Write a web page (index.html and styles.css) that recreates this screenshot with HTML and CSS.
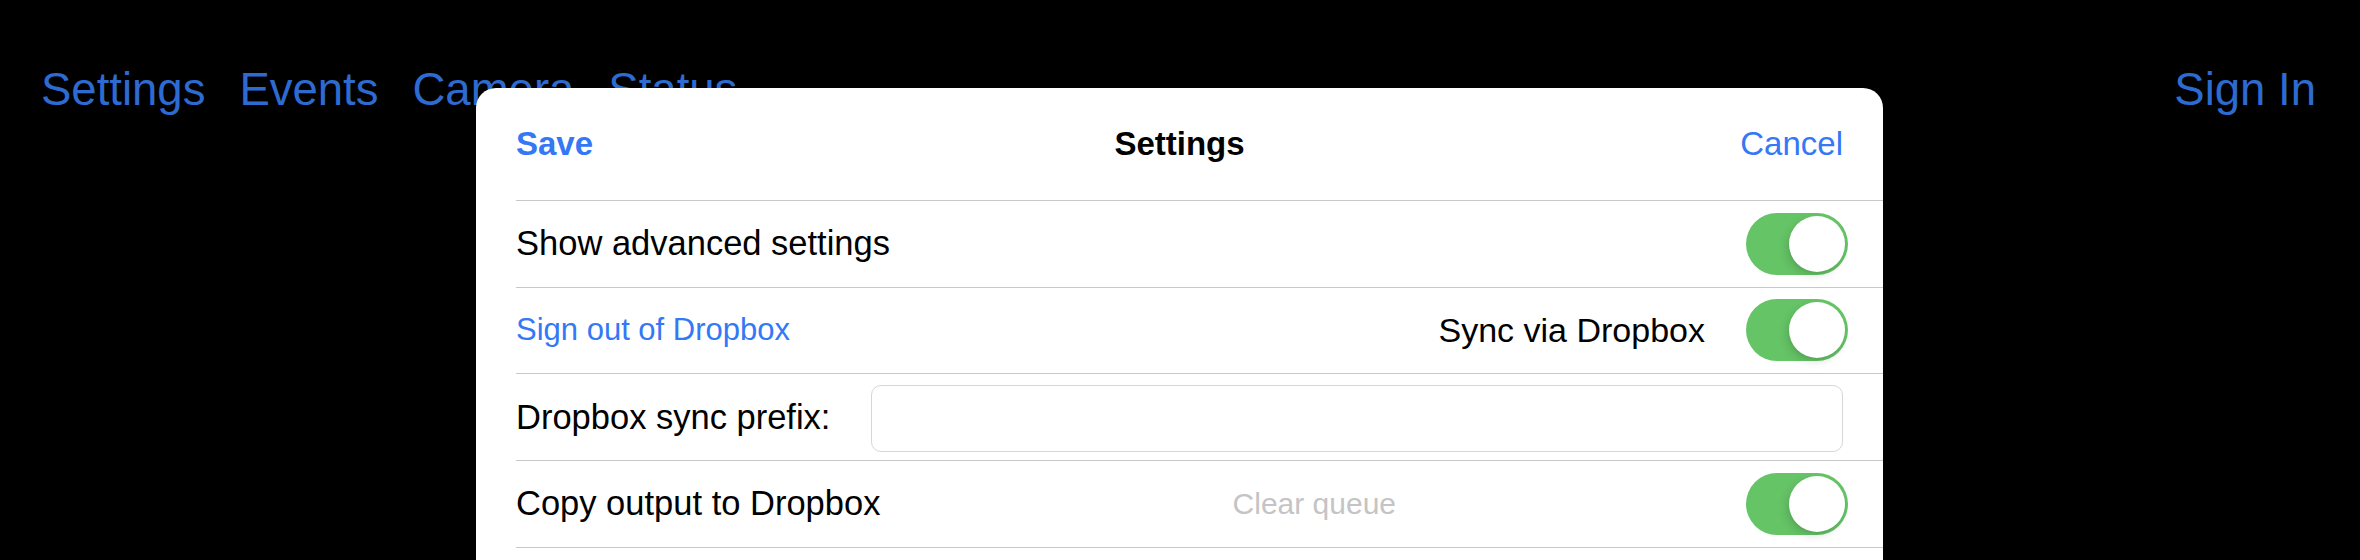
FILE: index.html
```html
<!DOCTYPE html>
<html lang="en">
<head>
<meta charset="utf-8">
<title>Settings</title>
<link rel="stylesheet" href="styles.css">
</head>
<body>
  <nav class="topbar">
    <div class="tabs">
      <a class="tab">Settings</a>
      <a class="tab">Events</a>
      <a class="tab">Camera</a>
      <a class="tab">Status</a>
    </div>
    <a class="tab">Sign In</a>
  </nav>

  <section class="sheet">
    <header class="sheet-header">
      <a class="btn btn-save">Save</a>
      <h1 class="sheet-title">Settings</h1>
      <a class="btn btn-cancel">Cancel</a>
    </header>

    <div class="list">
      <div class="row">
        <span class="label grow">Show advanced settings</span>
        <div class="switch on"><span class="knob"></span></div>
      </div>

      <div class="row">
        <a class="link grow">Sign out of Dropbox</a>
        <span class="label side-label">Sync via Dropbox</span>
        <div class="switch on"><span class="knob"></span></div>
      </div>

      <div class="row">
        <span class="label">Dropbox sync prefix:</span>
        <input class="text-input" type="text" value="">
      </div>

      <div class="row">
        <span class="label grow">Copy output to Dropbox</span>
        <a class="link disabled clear-queue">Clear queue</a>
        <div class="switch on"><span class="knob"></span></div>
      </div>

      <div class="row"></div>
    </div>
  </section>
</body>
</html>
```

FILE: styles.css
```css
html, body {
  margin: 0;
  padding: 0;
  height: 560px;
  overflow: hidden;
  background: #000;
  font-family: "Liberation Sans", Arial, sans-serif;
}

.topbar {
  display: flex;
  justify-content: space-between;
  padding: 67px 44px 0 41px;
  font-size: 45.5px;
  line-height: 46px;
}

.tabs {
  display: flex;
  gap: 34px;
}

.tab {
  color: #2d6bd1;
  text-decoration: none;
}

.sheet {
  position: absolute;
  top: 88px;
  left: 476px;
  width: 1407px;
  height: 472px;
  overflow: hidden;
  background: #fff;
  border-radius: 20px 20px 0 0;
}

.sheet-header {
  display: grid;
  grid-template-columns: 1fr auto 1fr;
  align-items: center;
  height: 112px;
  padding: 0 40px;
  font-size: 33px;
  line-height: 40px;
}

.btn {
  color: #3478f6;
  text-decoration: none;
}

.btn-save {
  font-weight: 700;
  justify-self: start;
}

.btn-cancel {
  justify-self: end;
}

.sheet-title {
  margin: 0;
  font-size: 33px;
  font-weight: 700;
  color: #000;
}

.row {
  display: flex;
  align-items: center;
  box-sizing: border-box;
  height: 86.67px;
  margin-left: 40px;
  padding-right: 35px;
  border-top: 1px solid #c8c7cc;
}

.label {
  font-size: 34.5px;
  color: #000;
}

.grow {
  flex: 1;
}

.side-label {
  font-size: 34px;
  margin-right: 41px;
}

.link {
  font-size: 31px;
  color: #3478f6;
  text-decoration: none;
}

.link.disabled {
  font-size: 30px;
  color: #c4c4c6;
}

.clear-queue {
  margin-right: 350px;
}

.text-input {
  flex: 1;
  height: 67px;
  box-sizing: border-box;
  margin: 2px 5px 0 41px;
  border: 1.5px solid #d6d6d8;
  border-radius: 10px;
  background: #fff;
  font: inherit;
  font-size: 30px;
  outline: none;
}

.switch {
  display: flex;
  justify-content: flex-end;
  align-items: center;
  box-sizing: border-box;
  width: 102px;
  height: 62px;
  padding: 3px;
  border-radius: 31px;
  background: #65c466;
}

.knob {
  width: 56px;
  height: 56px;
  border-radius: 50%;
  background: #fff;
  box-shadow: -3px 4px 8px rgba(0, 0, 0, 0.12), 0 2px 2px rgba(0, 0, 0, 0.05);
}
```
